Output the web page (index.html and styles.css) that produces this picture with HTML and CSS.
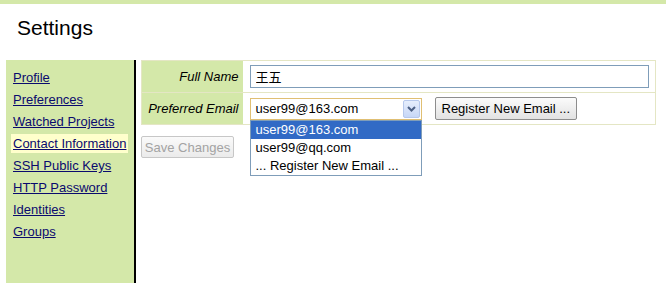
FILE: index.html
```html
<!DOCTYPE html>
<html lang="en">
<head>
  <meta charset="UTF-8"/>
  <title>Settings</title>
  <link rel="stylesheet" href="styles.css">
</head>
<body>

  <div class="topbar"></div>
  <h1 class="title">Settings</h1>

  <div class="page">
    <nav class="sidebar">
      <a href="#" class="nav-link">Profile</a>
      <a href="#" class="nav-link">Preferences</a>
      <a href="#" class="nav-link">Watched Projects</a>
      <a href="#" class="nav-link active">Contact Information</a>
      <a href="#" class="nav-link">SSH Public Keys</a>
      <a href="#" class="nav-link">HTTP Password</a>
      <a href="#" class="nav-link">Identities</a>
      <a href="#" class="nav-link">Groups</a>
    </nav>

    <div class="content">
      <table class="form">
        <tr>
          <th>Full Name</th>
          <td><input class="text-box" type="text" value="王五"></td>
        </tr>
        <tr>
          <th>Preferred Email</th>
          <td>
            <div class="email-row">
              <div class="select">
                <span class="select-value">user99@163.com</span>
                <span class="select-arrow">
                  <svg width="9" height="6" viewBox="0 0 9 6"><path d="M1 1 L4.5 4.5 L8 1" fill="none" stroke="#4d6185" stroke-width="2"/></svg>
                </span>
                <ul class="options">
                  <li class="selected">user99@163.com</li>
                  <li>user99@qq.com</li>
                  <li>... Register New Email ...</li>
                </ul>
              </div>
              <button class="button">Register New Email ...</button>
            </div>
          </td>
        </tr>
      </table>

      <button class="button save" disabled>Save Changes</button>
    </div>
  </div>

</body>
</html>
```

FILE: styles.css
```css
* {
  box-sizing: border-box;
  margin: 0;
  padding: 0;
}

body {
  font-family: 'Liberation Sans', Arial, sans-serif;
  font-size: 13px;
  color: #000;
  background: #fff;
  overflow: hidden;
}

.topbar {
  height: 4px;
  background: #d4e8a9;
}

.title {
  font-size: 21px;
  font-weight: normal;
  line-height: 24px;
  padding: 12px 0 0 17px;
  margin-bottom: 20px;
}

.page {
  display: flex;
  padding-left: 6px;
}

/* Left navigation */
.sidebar {
  width: 130px;
  min-height: 223px;
  background: #d4e8a9;
  border-right: 2px solid #000;
  padding-top: 8px;
  display: flex;
  flex-direction: column;
  gap: 3px;
}

.nav-link {
  display: block;
  height: 19px;
  line-height: 19px;
  margin: 0 6px 0 5px;
  padding-left: 2px;
  color: #0a0a6e;
  text-decoration: underline;
  white-space: nowrap;
}

.nav-link.active {
  background: #ffffcc;
}

.content {
  padding-left: 5px;
  flex: 1;
}

/* Form table */
.form {
  width: 515px;
  border-collapse: collapse;
  border: 1px solid #e4e6c4;
}

.form tr {
  border-bottom: 1px solid #e4e6c4;
}

.form th {
  width: 101px;
  background: #d4e8a9;
  font-weight: normal;
  font-style: italic;
  text-align: right;
  padding: 0 4px 0 0;
  white-space: nowrap;
}

.form td {
  padding: 4px 6px 4px 7px;
}

.text-box {
  display: block;
  width: 100%;
  height: 23px;
  border: 1px solid #7f9db9;
  padding: 0 5px;
  font-family: 'Liberation Sans', 'Noto Sans CJK SC', sans-serif;
  font-size: 13px;
  color: #000;
  outline: none;
}

.email-row {
  display: flex;
  align-items: center;
  gap: 13px;
}

/* Dropdown */
.select {
  position: relative;
  width: 172px;
  height: 22px;
  border: 1px solid #e0bf73;
  display: flex;
  align-items: center;
  justify-content: space-between;
  padding: 1px 1px 1px 5px;
  background: #fff;
}

.select-arrow {
  width: 17px;
  height: 18px;
  border: 1px solid #b6c8ec;
  border-radius: 2px;
  background: linear-gradient(#e6eefc, #c7d7f7);
  display: flex;
  align-items: center;
  justify-content: center;
}

.options {
  position: absolute;
  top: 21px;
  left: -1px;
  width: 172px;
  list-style: none;
  background: #fff;
  border: 1px solid #7f9db9;
}

.options li {
  height: 18px;
  line-height: 18px;
  padding-left: 5px;
  white-space: nowrap;
}

.options li.selected {
  background: #316ac5;
  color: #fff;
}

/* Buttons */
.button {
  height: 23px;
  padding: 0 6px;
  font-family: 'Liberation Sans', Arial, sans-serif;
  font-size: 13px;
  color: #000;
  background: linear-gradient(#fbfbfb, #e2e2e2);
  border: 1px solid #8d8d8d;
  border-radius: 2px;
  white-space: nowrap;
}

.save {
  display: block;
  margin-top: 11px;
  width: 93px;
  height: 22px;
  padding: 0;
  color: #a3a3a3;
  border-color: #c7c7c7;
  background: linear-gradient(#fafafa, #ebebeb);
}
```
